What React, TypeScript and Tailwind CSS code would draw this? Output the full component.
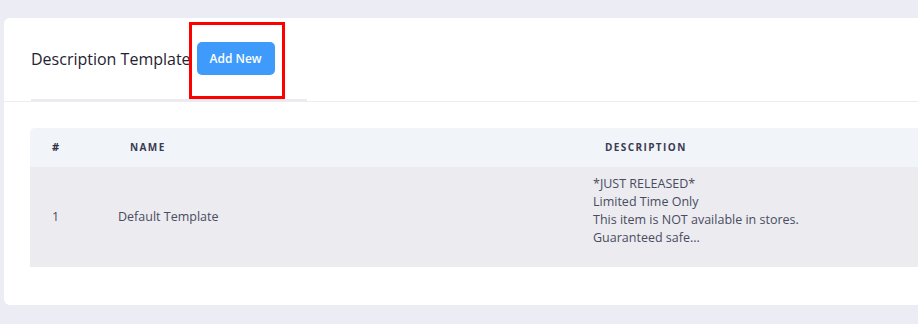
export default function App() {
  return (
    <div className="h-[324px] w-[918px] overflow-hidden bg-[#ECECF4] pt-[18px] pl-[4px] font-['Open_Sans',sans-serif]">
      <div className="h-[287px] w-[940px] rounded-l-[6px] bg-white">
        <div className="relative border-b border-[#ECECF2]">
          <div className="flex h-[83px] items-center pl-[27px]">
            <div className="relative flex h-[83px] items-center border-b-2 border-[#EAEAF1] pr-[14px]">
              <h3 className="text-[16px] text-[#1F2333]">Description Template</h3>
              <button className="ml-[6px] h-[33px] w-[78px] rounded-[5px] bg-[#3E9BFB] text-[12px] font-semibold text-white">
                Add New
              </button>
              <div className="pointer-events-none absolute left-[158px] top-[4px] h-[77px] w-[96px] border-[3px] border-[#FF0000]" />
              <div className="w-[18px]" />
            </div>
          </div>
        </div>
        <div className="px-[26px] pt-[26px]">
          <table className="w-[900px] border-collapse text-left">
            <thead>
              <tr className="h-[39px] bg-[#F1F4F8]">
                <th className="w-[88px] rounded-tl-[5px] pl-[22px] text-[11px] font-bold text-[#2E3147]">#</th>
                <th className="w-[475px] pl-[12px] text-[10px] font-bold tracking-[0.14em] text-[#3A3B52]">NAME</th>
                <th className="pl-[12px] text-[10px] font-bold tracking-[0.14em] text-[#3A3B52]">DESCRIPTION</th>
              </tr>
            </thead>
            <tbody>
              <tr className="h-[100px] bg-[#EBEBF0] text-[12.5px] text-[#4A4B60]">
                <td className="pl-[22px]">1</td>
                <td>Default Template</td>
                <td className="pt-[8px] pb-[20px] align-top leading-[18px]">
                  <div>*JUST RELEASED*</div>
                  <div>Limited Time Only</div>
                  <div>This item is NOT available in stores.</div>
                  <div>Guaranteed safe...</div>
                </td>
              </tr>
            </tbody>
          </table>
        </div>
      </div>
    </div>
  );
}
